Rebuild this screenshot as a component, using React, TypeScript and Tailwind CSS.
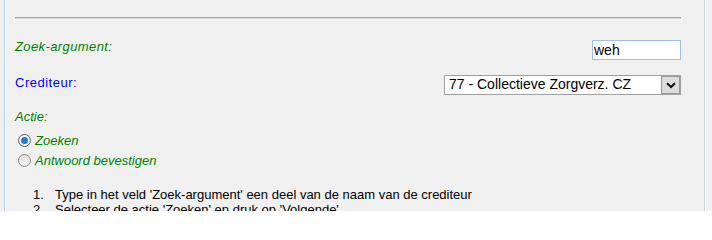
import React from "react";

const F = { fontFamily: '"Liberation Sans", Arial, sans-serif' };

function Radio({ checked, label }: { checked?: boolean; label: string }) {
  return (
    <div className="flex h-[20px] shrink-0 items-center">
      <span
        className={
          "ml-[3px] flex h-[13px] w-[13px] shrink-0 items-center justify-center rounded-full border " +
          (checked
            ? "border-[#5c5c5c] bg-[#f4f4f4]"
            : "border-[#8c8c8c] bg-gradient-to-b from-[#dedede] to-[#f2f2f2]")
        }
      >
        {checked && <span className="h-[7px] w-[7px] rounded-full bg-[#1d7fd6]" />}
      </span>
      <span className="ml-[4px] text-[13px] italic leading-[15px] text-[#008000]">{label}</span>
    </div>
  );
}

export default function App() {
  return (
    <div className="flex h-[211px] w-[712px] overflow-hidden bg-[#f0f0f0]" style={F}>
      <div className="w-[4px] shrink-0" />
      <div className="w-[1px] shrink-0 bg-[#bcd2ea]" />
      <div className="w-[1px] shrink-0 bg-[#fbfdff]" />
      <div className="flex min-w-0 flex-1 flex-col pl-[9px] pr-[23px] pt-[17px]">
        <div className="h-[1px] shrink-0 bg-[#a0a0a0]" />
        <div className="h-[1px] shrink-0 bg-[#dcdcdc]" />

        <div className="mt-[21px] flex h-[20px] shrink-0 items-start justify-between">
          <span className="-mt-[1px] text-[13px] italic leading-[15px] tracking-[0.4px] text-[#008000]">
            Zoek-argument:
          </span>
          <div className="h-[20px] w-[89px] border border-[#9fc0e6] bg-white pl-[1px] pt-[1px] text-[14px] leading-[16px] text-black">
            weh
          </div>
        </div>

        <div className="mt-[15px] flex h-[20px] shrink-0 items-start justify-between">
          <span className="text-[13px] leading-[15px] tracking-[0.5px] text-[#0000ff]">Crediteur:</span>
          <div className="flex h-[20px] w-[237px] border border-[#a0a0a0] bg-white">
            <span className="flex-1 pl-[4px] text-[14px] leading-[16px] text-black">
              77 - Collectieve Zorgverz. CZ
            </span>
            <span className="flex w-[19px] items-center justify-center border border-[#9a9a9a] bg-[#dcdcdc]">
              <svg width="10" height="7" viewBox="0 0 10 7">
                <path d="M1 1.2 L5 5 L9 1.2" fill="none" stroke="#111" strokeWidth="2" />
              </svg>
            </span>
          </div>
        </div>

        <div className="mt-[14px] shrink-0 text-[13px] italic leading-[15px] text-[#008000]">Actie:</div>

        <div className="mt-[6px] flex shrink-0 flex-col">
          <Radio checked label="Zoeken" />
          <Radio label="Antwoord bevestigen" />
        </div>

        <div className="mt-[17px] flex shrink-0 flex-col text-[13px] leading-[15px] text-black">
          <div className="flex">
            <span className="ml-[18px] w-[22px] shrink-0">1.</span>
            <span>Type in het veld 'Zoek-argument' een deel van de naam van de crediteur</span>
          </div>
          <div className="flex">
            <span className="ml-[18px] w-[22px] shrink-0">2.</span>
            <span>Selecteer de actie 'Zoeken' en druk op 'Volgende'</span>
          </div>
        </div>
      </div>
      <div className="w-[1px] shrink-0 bg-[#c9d3de]" />
      <div className="w-[1px] shrink-0 bg-[#fbfdff]" />
      <div className="w-[6px] shrink-0" />
    </div>
  );
}
